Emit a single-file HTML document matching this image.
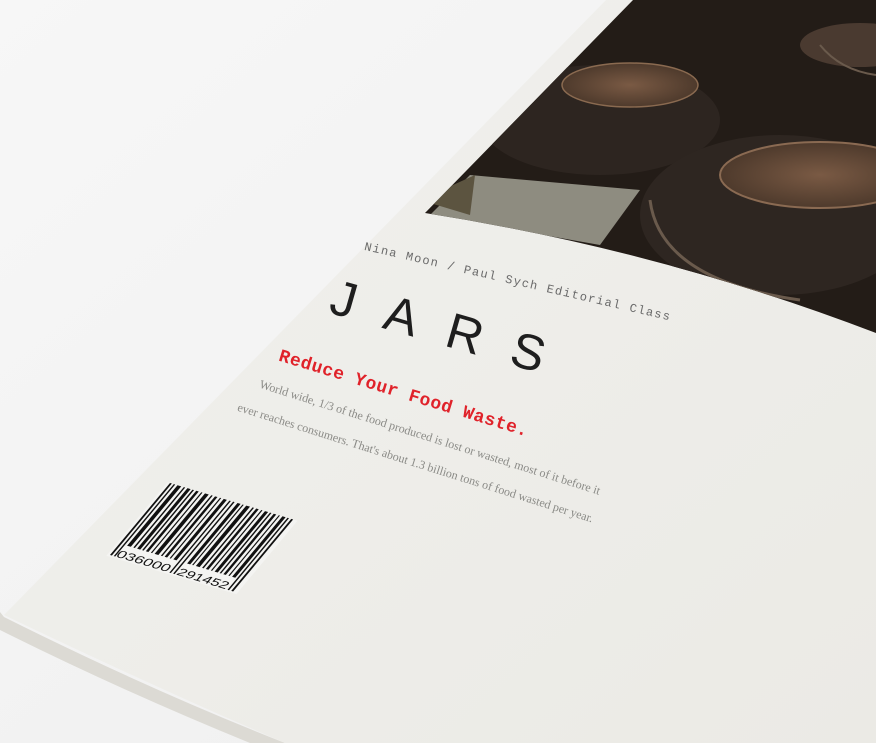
<!DOCTYPE html>
<html><head><meta charset="utf-8"><style>
html,body{margin:0;padding:0;width:876px;height:743px;overflow:hidden;background:#f2f2f2}
.t{position:absolute;transform-origin:0 0;white-space:nowrap}
</style></head><body>
<svg width="876" height="743" style="position:absolute;left:0;top:0">
<defs>
<linearGradient id="bg" x1="0" y1="0" x2="1" y2="1"><stop offset="0" stop-color="#f7f7f7"/><stop offset="1" stop-color="#eeeeee"/></linearGradient>
<linearGradient id="pg" x1="0" y1="0" x2="1" y2="1"><stop offset="0" stop-color="#f1f1ee"/><stop offset="1" stop-color="#ebeae5"/></linearGradient>
<radialGradient id="lid" cx="0.5" cy="0.5" r="0.5"><stop offset="0" stop-color="#7a5a44"/><stop offset="1" stop-color="#4e3a2c"/></radialGradient>
<clipPath id="ph"><path d="M633 0 L876 0 L876 333 Q660 250 425 213 Z"/></clipPath>
</defs>
<rect width="876" height="743" fill="url(#bg)"/>
<path d="M0 612 L4 617 Q150 690 285 743 L250 743 Q120 690 0 630 Z" fill="#dcdad4"/>
<path d="M606 0 L876 0 L876 743 L285 743 Q150 685 4 615 Z" fill="url(#pg)"/>
<g clip-path="url(#ph)">
<rect x="400" y="0" width="476" height="340" fill="#231c17"/>
<path d="M470 175 L640 190 L600 245 L430 215 Z" fill="#8e8c80"/>
<path d="M420 200 L475 175 L470 215 Z" fill="#5c5440"/>
<ellipse cx="600" cy="120" rx="120" ry="55" fill="#2d2520"/>
<ellipse cx="630" cy="85" rx="68" ry="22" fill="url(#lid)"/>
<ellipse cx="630" cy="85" rx="68" ry="22" fill="none" stroke="#8a6a50" stroke-width="1.5"/>
<ellipse cx="780" cy="215" rx="140" ry="80" fill="#2e2621"/>
<path d="M650 200 Q660 280 800 300" stroke="#6a5a4c" stroke-width="3" fill="none"/>
<ellipse cx="820" cy="175" rx="100" ry="33" fill="url(#lid)"/>
<ellipse cx="820" cy="175" rx="100" ry="33" fill="none" stroke="#8a6a52" stroke-width="2"/>
<ellipse cx="860" cy="45" rx="60" ry="22" fill="#4a3a30"/>
<path d="M820 45 Q840 70 876 75" stroke="#6a5a4c" stroke-width="2" fill="none"/>
</g>
<g transform="matrix(1.25,0.37,-0.6,0.72,170,483)">
<rect x="-2" y="0" width="104" height="102" fill="#f4f4f2"/>
<g fill="#111">
<rect x="0" y="0" width="1.5" height="100"/><rect x="3" y="0" width="1.2" height="100"/><rect x="6" y="0" width="3" height="84"/><rect x="11" y="0" width="1.2" height="84"/><rect x="14" y="0" width="2.5" height="84"/><rect x="18" y="0" width="1.2" height="84"/><rect x="21" y="0" width="2" height="84"/><rect x="25" y="0" width="1" height="84"/><rect x="28" y="0" width="3" height="84"/><rect x="33" y="0" width="1.2" height="84"/><rect x="36" y="0" width="2" height="84"/><rect x="40" y="0" width="1" height="84"/><rect x="43" y="0" width="2.5" height="84"/><rect x="47.5" y="0" width="1.2" height="100"/><rect x="50.5" y="0" width="1.2" height="100"/><rect x="54" y="0" width="2.5" height="84"/><rect x="58" y="0" width="1" height="84"/><rect x="61" y="0" width="3" height="84"/><rect x="66" y="0" width="1.2" height="84"/><rect x="69" y="0" width="2" height="84"/><rect x="73" y="0" width="1" height="84"/><rect x="76" y="0" width="2.5" height="84"/><rect x="80" y="0" width="1.2" height="84"/><rect x="83" y="0" width="2" height="84"/><rect x="87" y="0" width="1" height="84"/><rect x="90" y="0" width="2.5" height="84"/><rect x="94" y="0" width="1.2" height="100"/><rect x="97" y="0" width="1.5" height="100"/>
</g>
<text x="4" y="100" font-family="Liberation Sans, sans-serif" font-size="13" fill="#111" textLength="42" lengthAdjust="spacingAndGlyphs">036000</text>
<text x="52.5" y="100" font-family="Liberation Sans, sans-serif" font-size="13" fill="#111" textLength="40" lengthAdjust="spacingAndGlyphs">291452</text>
</g>
</svg>
<div class="t" style="left:366px;top:240px;transform:rotate(13deg);font:12px 'Liberation Mono',monospace;color:#6a6a6a;letter-spacing:1.3px">Nina Moon / Paul Sych Editorial Class</div>
<div class="t" style="left:340px;top:268px;transform:rotate(16deg);font:50px 'Liberation Sans',sans-serif;color:#1e1e1e;letter-spacing:31px">JARS</div>
<div class="t" style="left:282px;top:347px;transform:rotate(17deg);font:bold 18px 'Liberation Mono',monospace;color:#e0222a;letter-spacing:0.5px">Reduce Your Food Waste.</div>
<div class="t" style="left:262px;top:377px;transform:rotate(17.5deg);font:12px 'Liberation Serif',serif;color:#8a8a86">World wide, 1/3 of the food produced is lost or wasted, most of it before it</div>
<div class="t" style="left:240px;top:400px;transform:rotate(17.5deg);font:12px 'Liberation Serif',serif;color:#8a8a86">ever reaches consumers. That's about 1.3 billion tons of food wasted per year.</div>
</body></html>
